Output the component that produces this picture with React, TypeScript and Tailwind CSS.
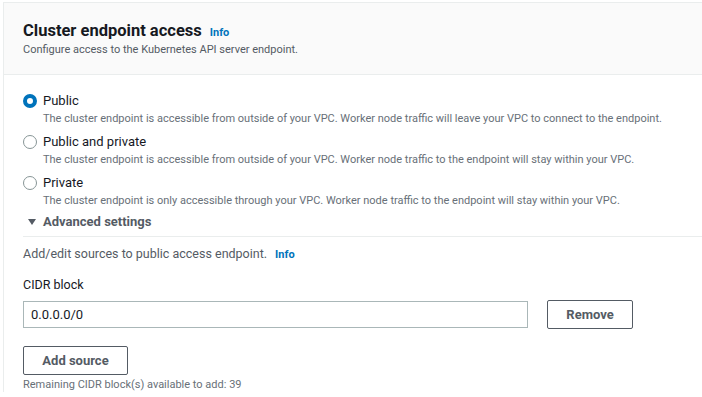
import React from 'react';

const FONT = { fontFamily: 'Roboto, "Liberation Sans", sans-serif' };

interface RadioOptionProps {
    label: string;
    description: string;
    checked?: boolean;
}

function RadioOption({ label, description, checked }: RadioOptionProps) {
    return (
        <div className="flex items-start">
            <span className="mt-[3px] flex h-[14px] w-[14px] shrink-0 items-center justify-center">
                {checked ? (
                    <span className="h-[14px] w-[14px] rounded-full border-[4px] border-[#0073bb] bg-white" />
                ) : (
                    <span className="h-[14px] w-[14px] rounded-full border border-[#879596] bg-white" />
                )}
            </span>
            <div className="ml-[6px]">
                <div className="text-[13px] leading-[20px] text-[#16191f]">{label}</div>
                <div className="mt-[1px] text-[11px] leading-[14px] text-[#687078]">{description}</div>
            </div>
        </div>
    );
}

export default function App() {
    return (
        <div className="min-h-screen overflow-hidden bg-white pl-[3px] pt-[2px]" style={FONT}>
            <div className="w-[720px] border-l border-t border-[#eaeded]">
                <div className="h-[72px] border-b border-[#eaeded] bg-[#fafafa] px-[19px] pt-[17px]">
                    <div className="flex items-baseline gap-[8px]">
                        <h2 className="text-[16.5px] font-bold leading-[22px] text-[#16191f]">Cluster endpoint access</h2>
                        <a className="text-[11px] font-bold text-[#0073bb]">Info</a>
                    </div>
                    <p className="text-[11px] leading-[16px] text-[#545b64]">
                        Configure access to the Kubernetes API server endpoint.
                    </p>
                </div>

                <div className="px-[19px] pt-[16px]">
                    <div className="flex flex-col gap-[6px]">
                        <RadioOption
                            checked
                            label="Public"
                            description="The cluster endpoint is accessible from outside of your VPC. Worker node traffic will leave your VPC to connect to the endpoint."
                        />
                        <RadioOption
                            label="Public and private"
                            description="The cluster endpoint is accessible from outside of your VPC. Worker node traffic to the endpoint will stay within your VPC."
                        />
                        <RadioOption
                            label="Private"
                            description="The cluster endpoint is only accessible through your VPC. Worker node traffic to the endpoint will stay within your VPC."
                        />
                    </div>

                    <div className="mt-[4px] flex items-center gap-[6px] pb-[4px] pl-[4px]">
                        <svg width="10" height="8" viewBox="0 0 10 8">
                            <path d="M1 1h8L5 7z" fill="#545b64" />
                        </svg>
                        <span className="text-[13px] font-bold leading-[20px] text-[#545b64]">Advanced settings</span>
                    </div>

                    <div className="border-t border-[#eaeded] pt-[7px]">
                        <div className="flex items-baseline gap-[8px]">
                            <span className="text-[12.5px] leading-[20px] text-[#545b64]">Add/edit sources to public access endpoint.</span>
                            <a className="text-[11px] font-bold text-[#0073bb]">Info</a>
                        </div>

                        <div className="mt-[11px] text-[12.5px] leading-[20px] text-[#16191f]">CIDR block</div>

                        <div className="mt-[5px] flex items-center gap-[19px]">
                            <div className="flex h-[27px] w-[505px] items-center border border-[#aab7b8] px-[7px] text-[13px] text-[#16191f]">
                                0.0.0.0/0
                            </div>
                            <button className="h-[29px] w-[86px] rounded-[2px] border border-[#545b64] bg-white text-[13px] font-bold text-[#545b64]">
                                Remove
                            </button>
                        </div>

                        <button className="mt-[17px] h-[29px] w-[105px] rounded-[2px] border border-[#545b64] bg-white text-[13px] font-bold text-[#545b64]">
                            Add source
                        </button>

                        <div className="mt-[3px] text-[11px] leading-[14px] text-[#687078]">
                            Remaining CIDR block(s) available to add: 39
                        </div>
                    </div>
                </div>
            </div>
        </div>
    );
}
